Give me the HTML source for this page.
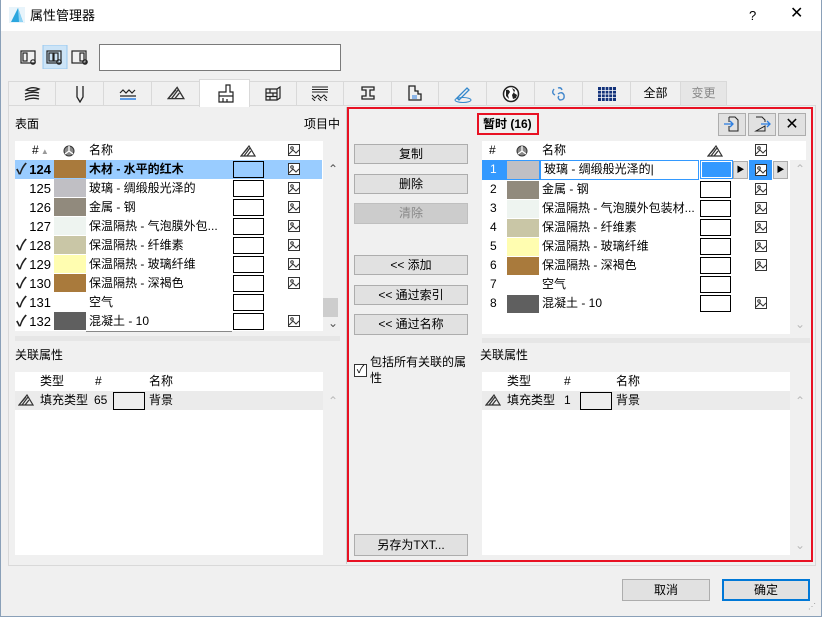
<!DOCTYPE html>
<html><head><meta charset="utf-8"><style>
*{box-sizing:border-box;margin:0;padding:0}
body{width:822px;height:617px;overflow:hidden;background:#f0f0f0;font-family:"Liberation Sans","Noto Sans CJK SC",sans-serif;font-size:12px;color:#000;position:relative}
.a{position:absolute}
.btn{position:absolute;background:#e1e1e1;border:1px solid #adadad;text-align:center;font-size:12px;line-height:18px}
.w{position:absolute;background:#fff}
.t{position:absolute;white-space:nowrap;line-height:19px}
.sw{position:absolute;width:32px;height:18px}
.fb{position:absolute;width:31px;height:17px;border:1px solid #000;background:#fff}
.tab{position:absolute;top:81px;height:24px;border:1px solid #d9d9d9;border-bottom:none;background:#f0f0f0;text-align:center;line-height:22px}
.tab svg{margin-top:3px}
.ck{position:absolute;left:16px;font-size:15px;line-height:19px;font-weight:bold;color:#222}
</style></head><body>
<svg width="0" height="0" style="position:absolute"><defs>
<symbol id="img" viewBox="0 0 12 12"><rect x="0.5" y="0.5" width="11" height="11" fill="#fff" stroke="#333"/><circle cx="4" cy="4" r="1.3" fill="none" stroke="#333"/><path d="M1 10 L5 6 L8 9 L11 6" fill="none" stroke="#333"/></symbol>
<symbol id="hatch" viewBox="0 0 16 12"><path d="M1 11 L9 1 L15 11 Z M4 11 L10 3 M7 11 L11 6 M1 11 L8 3" fill="none" stroke="#333" stroke-width="1.2"/></symbol>
<symbol id="pie" viewBox="0 0 12 12"><circle cx="6" cy="6" r="5" fill="#888" stroke="#333"/><path d="M6 6 V1 M6 6 L10 9 M6 6 L2 9" stroke="#fff" stroke-width="1.3"/></symbol>
</defs></svg>
<div class="a" style="left:0;top:0;width:822px;height:31px;background:#fff"></div>
<div class="a" style="left:0;top:0;width:1px;height:617px;background:#8aa0b8"></div>
<div class="a" style="left:821px;top:0;width:1px;height:617px;background:#8aa0b8"></div>
<div class="a" style="left:0;top:616px;width:822px;height:1px;background:#8aa0b8"></div>
<svg class="a" style="left:9px;top:7px" width="16" height="16"><rect width="16" height="16" fill="#e8f4fb"/><path d="M2 15 L9 1 L14 15 Z" fill="#2ba6de"/><path d="M9 1 L14 15 H10 Z" fill="#8fd3f4"/></svg>
<div class="t" style="left:30px;top:6px;font-size:13px">属性管理器</div>
<div class="t" style="left:749px;top:6px;font-size:13px">?</div>
<div class="t" style="left:790px;top:4px;font-size:16px">✕</div>
<svg class="a" style="left:18px;top:45px" width="80" height="24">
<rect x="25" y="0" width="24" height="24" fill="#cce4f7" stroke="#99c9ef"/>
<g fill="none" stroke="#222" stroke-width="1.2"><rect x="3" y="6" width="14" height="12"/><rect x="5" y="8" width="4" height="8"/><circle cx="15" cy="17" r="2.2"/>
<rect x="29" y="6" width="14" height="12"/><rect x="31" y="8" width="4" height="8"/><rect x="36" y="8" width="4" height="8"/><circle cx="41" cy="17" r="2.2"/>
<rect x="54" y="6" width="14" height="12"/><rect x="62" y="8" width="4" height="8"/><circle cx="67" cy="17" r="2.2"/></g></svg>
<div class="w" style="left:99px;top:44px;width:242px;height:27px;border:1px solid #7a7a7a"></div>
<!-- tabs -->
<div class="tab" style="left:8px;width:48px"><svg width="18" height="16"><g fill="none" stroke="#222" stroke-width="1.3"><path d="M3 5 Q9 1 16 4 Q10 7 3 5Z M2 9 Q9 6 16 8 M2 12 Q9 9 16 11 M2 15 Q9 12 16 14"/></g></svg></div>
<div class="tab" style="left:55px;width:49px"><svg width="12" height="18"><path d="M3 1V12L6 17L9 12V1" fill="none" stroke="#222" stroke-width="1.3"/></svg></div>
<div class="tab" style="left:103px;width:49px"><svg width="20" height="16"><path d="M2 8 L5 5 L8 8 L11 5 L14 8 L17 5 M2 11 H18" fill="none" stroke="#222" stroke-width="1.2"/><path d="M2 14H18" stroke="#2a7de1" stroke-width="1.5"/></svg></div>
<div class="tab" style="left:151px;width:49px"><svg width="18" height="16"><use href="#hatch"/></svg></div>
<div class="tab" style="left:199px;width:51px;top:79px;height:28px;background:#fff;z-index:2"><svg width="18" height="20" style="margin-top:4px"><path d="M10 1H14V8H17V12H3V8H10Z M3 12 V18 H17 V12 M7 14V18 M11 15V18" fill="none" stroke="#222" stroke-width="1.2"/></svg></div>
<div class="tab" style="left:249px;width:48px"><svg width="18" height="16"><path d="M2 4H13L16 2V13L13 15H2Z M2 4V15 M13 4V15 M2 8H13 M2 11.5H13 M6 4V8 M9 8V11.5 M6 11.5V15" fill="none" stroke="#222" stroke-width="1.2"/></svg></div>
<div class="tab" style="left:296px;width:48px"><svg width="20" height="16"><path d="M2 2H18M2 4.5H18M2 7H18" stroke="#222"/><path d="M2 10L5 13L8 10L11 13L14 10L17 13 M2 13L5 16 M8 13L11 16 M14 13L17 16" stroke="#222" fill="none"/></svg></div>
<div class="tab" style="left:343px;width:49px"><svg width="18" height="16"><path d="M3 2H15V5H11V11H15V14H3V11H7V5H3Z" fill="none" stroke="#222" stroke-width="1.3"/></svg></div>
<div class="tab" style="left:391px;width:48px"><svg width="18" height="16"><path d="M3 1H9V6H12V9H15V15H3Z" fill="none" stroke="#222" stroke-width="1.3"/><path d="M6 11H11M6 13H11" stroke="#2a7de1"/></svg></div>
<div class="tab" style="left:438px;width:49px"><svg width="20" height="18"><path d="M4 13L14 3L16 5L6 15Z" fill="none" stroke="#38c" stroke-width="1.3"/><ellipse cx="10" cy="15" rx="8" ry="2.5" fill="none" stroke="#38c"/></svg></div>
<div class="tab" style="left:486px;width:49px"><svg width="18" height="18"><circle cx="9" cy="9" r="7.5" fill="#fff" stroke="#222" stroke-width="1.5"/><path d="M4 5 Q7 4 8 7 L6 10 L7 14 L4 11Z M10 3 L13 5 L12 8 L15 10 L14 13 L11 14 L10 10 L12 7Z" fill="#222"/></svg></div>
<div class="tab" style="left:534px;width:49px"><svg width="18" height="18"><path d="M4 4Q1 8 5 10 M8 9 Q12 6 14 10 Q15 15 10 15 Q7 13 9 11" fill="none" stroke="#48c" stroke-width="1.4"/><path d="M8 3Q11 2 12 5" fill="none" stroke="#48c" stroke-width="1.4"/></svg></div>
<div class="tab" style="left:582px;width:49px"><svg width="18" height="14" style="margin-top:5px"><rect width="18" height="14" fill="#13327a"/><path d="M0 3.5H18M0 7H18M0 10.5H18M3.6 0V14M7.2 0V14M10.8 0V14M14.4 0V14" stroke="#fff" stroke-width="0.8"/></svg></div>
<div class="tab" style="left:630px;width:51px">全部</div>
<div class="tab" style="left:680px;width:47px;background:#e6e6e6;color:#888">变更</div>
<div class="a" style="left:8px;top:105px;width:808px;height:461px;border:1px solid #d9d9d9;background:#f0f0f0"></div>
<div class="a" style="left:10px;top:107px;width:337px;height:457px;border-right:1px solid #ccc"></div>
<div class="t" style="left:15px;top:115px">表面</div>
<div class="t" style="left:304px;top:115px">项目中</div>
<div class="w" style="left:15px;top:141px;width:308px;height:190px"></div>
<div class="a" style="left:323px;top:160px;width:16px;height:171px;background:#f0f0f0"></div>
<div class="t" style="left:32px;top:141px">#<span style="color:#999;font-size:8px"> ▲</span></div>
<svg class="a" style="left:63px;top:145px" width="12" height="12"><use href="#pie"/></svg>
<div class="t" style="left:89px;top:141px">名称</div>
<svg class="a" style="left:240px;top:145px" width="16" height="12"><use href="#hatch"/></svg>
<svg class="a" style="left:288px;top:144px" width="12" height="12"><use href="#img"/></svg>
<div class="a" style="left:15px;top:160px;width:307px;height:19px;background:#99ccff"></div>
<div class="t" style="left:328px;top:160px;color:#555">⌃</div>
<div class="a" style="left:323px;top:298px;width:15px;height:19px;background:#cdcdcd"></div>
<div class="t" style="left:328px;top:314px;color:#555">⌄</div>
<div id="L"></div>
<div class="a" style="left:86px;top:331px;width:146px;height:1px;background:#888"></div>
<div class="a" style="left:15px;top:336px;width:325px;height:5px;background:#e6e6e6"></div>
<div class="t" style="left:15px;top:346px">关联属性</div>
<div class="w" style="left:15px;top:372px;width:308px;height:183px"></div>
<div class="t" style="left:40px;top:372px">类型</div>
<div class="t" style="left:95px;top:372px">#</div>
<div class="t" style="left:149px;top:372px">名称</div>
<div class="a" style="left:15px;top:391px;width:308px;height:19px;background:#ebebeb"></div>
<svg class="a" style="left:18px;top:394px" width="16" height="12"><use href="#hatch"/></svg>
<div class="t" style="left:40px;top:391px">填充类型</div>
<div class="t" style="left:94px;top:391px">65</div>
<div class="a" style="left:113px;top:392px;width:32px;height:18px;border:1px solid #000;background:#eee"></div>
<div class="t" style="left:149px;top:391px">背景</div>
<div class="t" style="left:328px;top:392px;color:#bbb">⌃</div>
<div class="a" style="left:347px;top:107px;width:466px;height:455px;border:2px solid #e81123"></div>
<div class="btn" style="left:354px;top:144px;width:114px;height:20px">复制</div>
<div class="btn" style="left:354px;top:174px;width:114px;height:20px">删除</div>
<div class="btn" style="left:354px;top:203px;width:114px;height:21px;background:#ccc;border-color:#bfbfbf;color:#888">清除</div>
<div class="btn" style="left:354px;top:255px;width:114px;height:20px">&lt;&lt; 添加</div>
<div class="btn" style="left:354px;top:285px;width:114px;height:20px">&lt;&lt; 通过索引</div>
<div class="btn" style="left:354px;top:314px;width:114px;height:21px">&lt;&lt; 通过名称</div>
<div class="a" style="left:354px;top:364px;width:13px;height:13px;border:1px solid #333;background:#fff;font-size:11px;line-height:11px;text-align:center">✓</div>
<div class="a" style="left:370px;top:354px;width:100px;line-height:16px">包括所有关联的属性</div>
<div class="btn" style="left:354px;top:534px;width:114px;height:22px;line-height:20px">另存为TXT...</div>
<div class="a" style="left:477px;top:113px;width:62px;height:22px;border:2px solid #e81123;font-weight:bold;line-height:18px;padding-left:4px">暂时 (16)</div>
<div class="btn" style="left:718px;top:113px;width:28px;height:23px"><svg width="18" height="18" style="margin-top:1px"><path d="M6 2H12L15 5V16H6V11M6 7V2" fill="none" stroke="#222"/><path d="M1 9H10M7 6L10 9L7 12" fill="none" stroke="#2a7de1" stroke-width="1.3"/></svg></div>
<div class="btn" style="left:748px;top:113px;width:28px;height:23px"><svg width="18" height="18" style="margin-top:1px"><path d="M3 2H9L12 5V7M12 11V16H3Z" fill="none" stroke="#222"/><path d="M8 9H17M14 6L17 9L14 12" fill="none" stroke="#2a7de1" stroke-width="1.3"/></svg></div>
<div class="btn" style="left:778px;top:113px;width:28px;height:23px;font-size:16px;line-height:21px">✕</div>
<div class="w" style="left:482px;top:141px;width:324px;height:193px"></div>
<div class="a" style="left:790px;top:160px;width:16px;height:174px;background:#f0f0f0"></div>
<div class="t" style="left:489px;top:141px">#</div>
<svg class="a" style="left:516px;top:145px" width="12" height="12"><use href="#pie"/></svg>
<div class="t" style="left:542px;top:141px">名称</div>
<svg class="a" style="left:707px;top:145px" width="16" height="12"><use href="#hatch"/></svg>
<svg class="a" style="left:755px;top:144px" width="12" height="12"><use href="#img"/></svg>
<div class="a" style="left:482px;top:160px;width:24px;height:20px;background:#3399ff"></div>
<div class="a" style="left:506px;top:160px;width:34px;height:20px;background:#3399ff"></div>
<div class="a" style="left:540px;top:160px;width:159px;height:20px;border:1px solid #3399ff;background:#fff"></div>
<div class="a" style="left:701px;top:161px;width:31px;height:17px;border:1px solid #fff;outline:1px solid #3399ff;background:#3399ff"></div>
<div class="a" style="left:733px;top:161px;width:15px;height:18px;background:#e1e1e1;border:1px solid #adadad;font-size:8px;text-align:center;line-height:16px">▶</div>
<div class="a" style="left:749px;top:160px;width:23px;height:20px;background:#3399ff"></div>
<svg class="a" style="left:755px;top:164px" width="12" height="12"><use href="#img"/></svg>
<div class="a" style="left:773px;top:161px;width:15px;height:18px;background:#e1e1e1;border:1px solid #adadad;font-size:8px;text-align:center;line-height:16px">▶</div>
<div class="t" style="left:795px;top:160px;color:#bbb">⌃</div>
<div class="t" style="left:795px;top:315px;color:#bbb">⌄</div>
<div id="R"></div>
<div class="a" style="left:482px;top:338px;width:328px;height:5px;background:#e6e6e6"></div>
<div class="t" style="left:480px;top:346px">关联属性</div>
<div class="w" style="left:482px;top:372px;width:308px;height:183px"></div>
<div class="t" style="left:507px;top:372px">类型</div>
<div class="t" style="left:564px;top:372px">#</div>
<div class="t" style="left:616px;top:372px">名称</div>
<div class="a" style="left:482px;top:391px;width:308px;height:19px;background:#ebebeb"></div>
<svg class="a" style="left:485px;top:394px" width="16" height="12"><use href="#hatch"/></svg>
<div class="t" style="left:507px;top:391px">填充类型</div>
<div class="t" style="left:564px;top:391px">1</div>
<div class="a" style="left:580px;top:392px;width:32px;height:18px;border:1px solid #000;background:#eee"></div>
<div class="t" style="left:616px;top:391px">背景</div>
<div class="t" style="left:795px;top:392px;color:#bbb">⌃</div>
<div class="t" style="left:795px;top:536px;color:#bbb">⌄</div>
<div class="btn" style="left:622px;top:579px;width:88px;height:22px;line-height:20px">取消</div>
<div class="btn" style="left:722px;top:579px;width:88px;height:22px;line-height:18px;border:2px solid #0078d7">确定</div>
<div class="t" style="left:808px;top:602px;font-size:8px;color:#999;line-height:10px">⋰</div>
<script>
var L=[["✓","124","#a97a3c","木材 - 水平的红木",1,1],["","125","#c0bfc4","玻璃 - 绸缎般光泽的",1,0],["","126","#918a7d","金属 - 钢",1,0],["","127","#eef4f0","保温隔热 - 气泡膜外包...",1,0],["✓","128","#c9c6a6","保温隔热 - 纤维素",1,0],["✓","129","#fffdb0","保温隔热 - 玻璃纤维",1,0],["✓","130","#a97a3c","保温隔热 - 深褐色",1,0],["✓","131","","空气",0,0],["✓","132","#5f5f5f","混凝土 - 10",1,0]];
var h="";L.forEach(function(r,i){var y=160+i*19;var b=r[5]?"font-weight:bold;":"";
h+='<div class="ck" style="top:'+y+'px">'+r[0]+'</div><div class="t" style="left:26px;width:25px;text-align:right;top:'+y+'px;font-size:13px;'+b+'">'+r[1]+'</div>';
if(r[2])h+='<div class="sw" style="left:54px;top:'+y+'px;background:'+r[2]+'"></div>';
h+='<div class="t" style="left:89px;top:'+y+'px;'+b+'">'+r[3]+'</div><div class="fb" style="left:233px;top:'+(y+1)+'px;'+(r[5]?'background:#99ccff':'')+'"></div>';
if(r[4])h+='<svg class="a" style="left:288px;top:'+(y+3)+'px" width="12" height="12"><use href="#img"/></svg>';});
document.getElementById("L").outerHTML=h;
var R=[["1","#c0bfc4","玻璃 - 绸缎般光泽的",1],["2","#918a7d","金属 - 钢",1],["3","#eef4f0","保温隔热 - 气泡膜外包装材...",1],["4","#c9c6a6","保温隔热 - 纤维素",1],["5","#fffdb0","保温隔热 - 玻璃纤维",1],["6","#a97a3c","保温隔热 - 深褐色",1],["7","","空气",0],["8","#5f5f5f","混凝土 - 10",1]];
h="";R.forEach(function(r,i){var y=(i==0?160:161+i*19);
h+='<div class="t" style="left:490px;top:'+y+'px;'+(i==0?'color:#fff':'')+'">'+r[0]+'</div>';
if(r[1])h+='<div class="sw" style="left:507px;top:'+(y+1)+'px;background:'+r[1]+'"></div>';
h+='<div class="t" style="left:'+(i==0?544:542)+'px;top:'+y+'px">'+r[2]+(i==0?'|':'')+'</div>';
if(i>0){h+='<div class="fb" style="left:700px;top:'+(y+1)+'px"></div>';
if(r[3])h+='<svg class="a" style="left:755px;top:'+(y+3)+'px" width="12" height="12"><use href="#img"/></svg>';}});
document.getElementById("R").outerHTML=h;
</script>
</body></html>
